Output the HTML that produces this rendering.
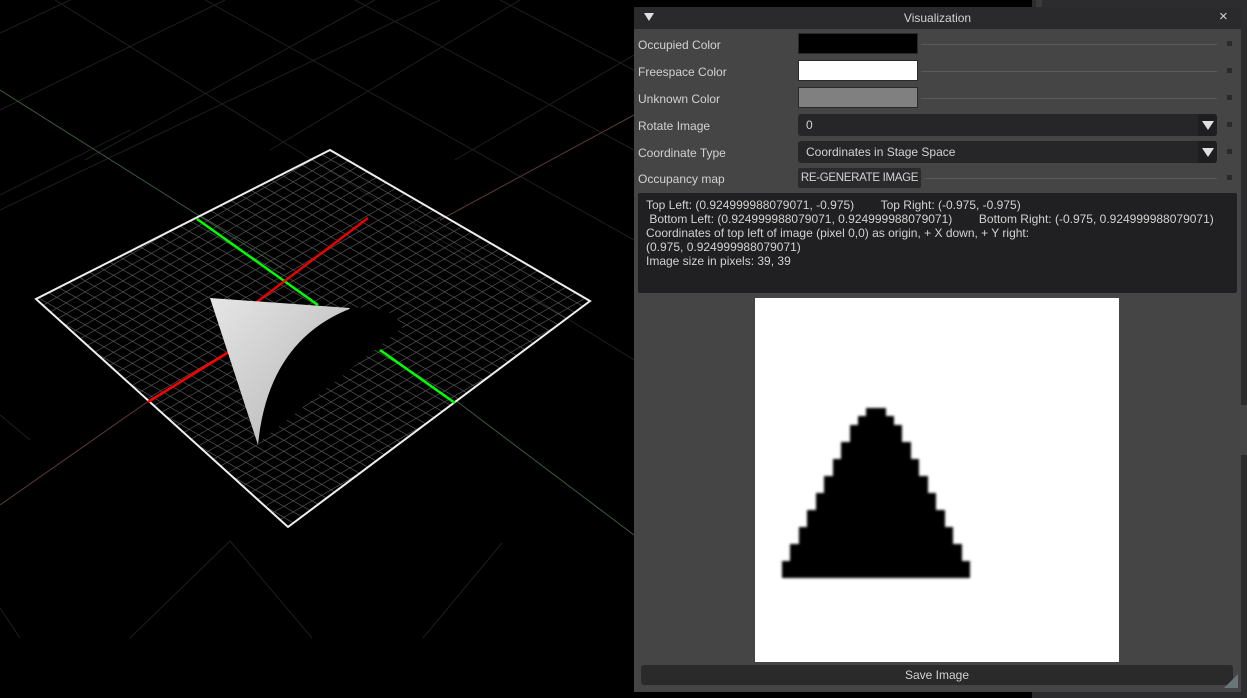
<!DOCTYPE html>
<html><head><meta charset="utf-8"><style>
body{margin:0;width:1247px;height:698px;background:#000;position:relative;overflow:hidden;font-family:"Liberation Sans",sans-serif;font-size:12px;color:#d2d2d2}
.a{position:absolute}
.lbl{position:absolute;left:638px}
.line{position:absolute;height:1px;background:#5a5a5a}
.dot{position:absolute;left:1227px;width:5px;height:5px;background:#2a2a2a}
.sw{position:absolute;left:798px;width:120px;height:21px;border:1px solid #2a2a2a;box-sizing:border-box}
.dd{position:absolute;left:798px;width:419px;height:22px;background:#262628;border-radius:3px}
.dd span{position:absolute;left:8px;top:4px}
.dd i{position:absolute;right:0;top:0;width:19px;height:22px;background:#1e1e20;border-radius:0 3px 3px 0}
.dd i:after{content:"";position:absolute;left:4px;top:7px;border-left:6px solid transparent;border-right:6px solid transparent;border-top:9px solid #e0e0e0}
</style></head><body>
<svg class="a" style="left:0;top:0" width="634" height="698">
<g stroke="#1e1e1e" stroke-width="1" fill="none">
<line x1="0" y1="33" x2="230" y2="-75"/><line x1="0" y1="110" x2="225" y2="0"/><line x1="0" y1="210" x2="440" y2="0"/>
<line x1="85" y1="160" x2="375" y2="0"/><line x1="270" y1="150" x2="520" y2="0"/><line x1="455" y1="160" x2="634" y2="55"/>
<line x1="55" y1="0" x2="634" y2="360"/><line x1="205" y1="0" x2="634" y2="240"/><line x1="355" y1="0" x2="634" y2="150"/><line x1="500" y1="0" x2="634" y2="70"/>
<line x1="0" y1="415" x2="30" y2="440"/>
<line x1="0" y1="608" x2="20" y2="638"/><line x1="130" y1="638" x2="230" y2="541"/><line x1="230" y1="541" x2="312" y2="638"/><line x1="423" y1="638" x2="502" y2="543"/>
<line x1="0" y1="195" x2="130" y2="130"/>
</g>
<line x1="0" y1="90" x2="285" y2="270" stroke="#3d5a3d"/>
<line x1="455" y1="400" x2="634" y2="535" stroke="#3d5a3d"/>
<line x1="0" y1="505" x2="150" y2="400" stroke="#5a3a3a"/>
<line x1="440" y1="220" x2="634" y2="115" stroke="#5a3a3a"/>
<defs><pattern id="g" width="11" height="11" patternUnits="userSpaceOnUse" patternTransform="matrix(0.86,0.5,-0.86,0.5,0,0)"><path d="M0 0H11M0 0V11" stroke="#6a6a6a" stroke-width="1.2" fill="none"/></pattern>
<linearGradient id="w" x1="0" y1="0" x2="1" y2="1"><stop offset="0" stop-color="#e6e6e6"/><stop offset="1" stop-color="#b0b0b0"/></linearGradient></defs>
<polygon points="330,150 590,301 288,527 36,299" fill="url(#g)" stroke="#eee" stroke-width="2"/>
<line x1="197" y1="219" x2="318" y2="305" stroke="#0f0" stroke-width="2.5"/>
<line x1="380" y1="350" x2="455" y2="403" stroke="#0f0" stroke-width="2.5"/>
<line x1="148" y1="402" x2="232" y2="350" stroke="#f00" stroke-width="2.5"/>
<line x1="253" y1="305" x2="368" y2="218" stroke="#f00" stroke-width="2.5" opacity=".9"/>
<path d="M210,298 L350,308 L258,445 Z" fill="url(#w)"/>
<path d="M258,445 Q268,340 352,308 Q395,304 402,328 L262,440 Z" fill="#000"/>
</svg>
<div class="a" style="left:1032px;top:0;width:215px;height:698px;background:#2c2c2e"></div>
<div class="a" style="left:1036px;top:0;width:6px;height:10px;background:#3a3a3a"></div>
<div class="a" style="left:1240px;top:405px;width:7px;height:50px;background:#444"></div>
<div class="a" style="left:634px;top:7px;width:607px;height:685px;background:#454545"></div>
<div class="a" style="left:634px;top:7px;width:607px;height:22px;background:#2a2a2c"></div>
<div class="a" style="left:644px;top:13px;border-left:5px solid transparent;border-right:5px solid transparent;border-top:8px solid #e0e0e0"></div>
<div class="a" style="left:634px;top:11px;width:607px;text-align:center">Visualization</div>
<div class="a" style="left:1219px;top:8px;font-size:15px">×</div>
<div class="lbl" style="top:38px">Occupied Color</div>
<div class="lbl" style="top:65px">Freespace Color</div>
<div class="lbl" style="top:92px">Unknown Color</div>
<div class="lbl" style="top:119px">Rotate Image</div>
<div class="lbl" style="top:146px">Coordinate Type</div>
<div class="lbl" style="top:172px">Occupancy map</div>
<div class="sw" style="top:33px;background:#000"></div>
<div class="sw" style="top:60px;background:#fff"></div>
<div class="sw" style="top:87px;background:#808080"></div>
<div class="line" style="left:921px;top:44px;width:296px"></div>
<div class="line" style="left:921px;top:71px;width:296px"></div>
<div class="line" style="left:921px;top:98px;width:296px"></div>
<div class="line" style="left:924px;top:178px;width:293px"></div>
<div class="dot" style="top:41px"></div><div class="dot" style="top:68px"></div><div class="dot" style="top:95px"></div><div class="dot" style="top:122px"></div><div class="dot" style="top:149px"></div><div class="dot" style="top:175px"></div>
<div class="dd" style="top:114px"><span>0</span><i></i></div>
<div class="dd" style="top:141px"><span>Coordinates in Stage Space</span><i></i></div>
<div class="a" style="left:798px;top:168px;width:123px;height:20px;background:#2a2a2c;border-radius:2px;text-align:center;line-height:20px;white-space:nowrap;font-size:11.5px;letter-spacing:-0.3px">RE-GENERATE IMAGE</div>
<div class="a" style="left:638px;top:193px;width:599px;height:100px;background:#202022;border-radius:2px;line-height:14px;padding:5px 0 0 8px;box-sizing:border-box;white-space:pre">Top Left: (0.924999988079071, -0.975)        Top Right: (-0.975, -0.975)
 Bottom Left: (0.924999988079071, 0.924999988079071)        Bottom Right: (-0.975, 0.924999988079071)
Coordinates of top left of image (pixel 0,0) as origin, + X down, + Y right:
(0.975, 0.924999988079071)
Image size in pixels: 39, 39</div>
<div class="a" style="left:755px;top:298px;width:364px;height:364px;background:#fff"></div>
<svg class="a" style="left:755px;top:298px" width="364" height="364"><defs><filter id="b"><feGaussianBlur stdDeviation="1.3"/></filter></defs>
<polygon filter="url(#b)" fill="#000" points="27,280 27,263 35,263 35,246 44,246 44,229 52,229 52,212 61,212 61,195 69,195 69,178 78,178 78,161 86,161 86,144 95,144 95,127 103,127 103,118 111,118 111,110 131,110 131,118 139,118 139,127 147,127 147,144 156,144 156,161 164,161 164,178 173,178 173,195 181,195 181,212 190,212 190,229 198,229 198,246 207,246 207,263 215,263 215,280"/></svg>
<div class="a" style="left:641px;top:665px;width:592px;height:20px;background:#2a2a2a;border-radius:3px;text-align:center;line-height:20px">Save Image</div>
<div class="a" style="left:1224px;top:674px;width:0;height:0;border-left:14px solid transparent;border-bottom:14px solid #6a7578"></div>
</body></html>
